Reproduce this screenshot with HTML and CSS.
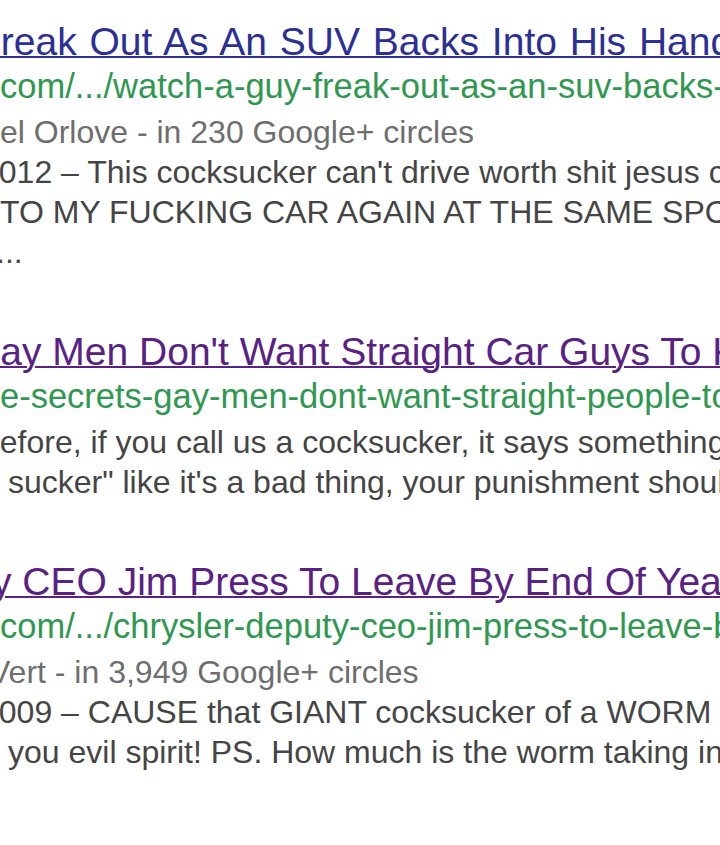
FILE: index.html
```html
<!DOCTYPE html>
<html lang="en">
<head>
  <meta charset="UTF-8" />
  <title>Search results</title>
  <link rel="stylesheet" href="styles.css">
</head>
<body>
  <div class="results">

    <!-- result 1 -->
    <div class="result">
      <a class="title seen-no shift-f" href="#">Freak Out As An SUV Backs Into His Handicap Spot</a>
      <div class="url">com/.../watch-a-guy-freak-out-as-an-suv-backs-into-his</div>
      <div class="meta">el Orlove - in 230 Google+ circles</div>
      <div class="snip shift-2">2012 &ndash; This cocksucker can't drive worth shit jesus christ</div>
      <div class="snip">TO MY FUCKING CAR AGAIN AT THE SAME SPOT</div>
      <div class="snip shift-dots">...</div>
    </div>

    <!-- result 2 -->
    <div class="result">
      <a class="title shift-g" href="#">Gay Men Don't Want Straight Car Guys To Know</a>
      <div class="url">e-secrets-gay-men-dont-want-straight-people-to</div>
      <div class="snip first shift-b">before, if you call us a cocksucker, it says something</div>
      <div class="snip pad">sucker" like it's a bad thing, your punishment should</div>
    </div>

    <!-- result 3 -->
    <div class="result">
      <a class="title shift-y" href="#">y CEO Jim Press To Leave By End Of Year</a>
      <div class="url">com/.../chrysler-deputy-ceo-jim-press-to-leave-by</div>
      <div class="meta shift-v">Vert - in 3,949 Google+ circles</div>
      <div class="snip shift-2">2009 &ndash; CAUSE that GIANT cocksucker of a WORM</div>
      <div class="snip pad">you evil spirit! PS. How much is the worm taking in</div>
    </div>

  </div>
</body>
</html>
```

FILE: styles.css
```css
body, html {
  margin: 0;
  padding: 0;
  background-color: #ffffff;
  font-family: "Liberation Sans", Arial, sans-serif;
  overflow: hidden;
}

.results {
  padding-top: 20px;
  display: flex;
  flex-direction: column;
  gap: 58px;
}

.result {
  display: flex;
  flex-direction: column;
  white-space: nowrap;
}

.title {
  display: block;
  font-size: 39px;
  line-height: 44px;
  color: #5a2184;
  text-decoration: underline;
  text-decoration-thickness: 2px;
}

.title.seen-no {
  color: #2b2f96;
  word-spacing: 2px;
}

.url {
  font-size: 34.5px;
  line-height: 44px;
  color: #2f9850;
}

.meta {
  font-size: 32px;
  line-height: 40px;
  color: #6e6e6e;
  margin-top: 4px;
}

.snip {
  font-size: 32px;
  line-height: 40px;
  color: #454545;
}

.snip.first {
  margin-top: 4px;
}

/* left edge clipping of the zoomed crop */
.shift-f { text-indent: -23px; }
.shift-g { text-indent: -30px; }
.shift-y { text-indent: -8px; }
.shift-v { text-indent: -11px; }
.shift-2 { text-indent: -19px; }
.shift-b { text-indent: -18px; }
.shift-dots { text-indent: -4px; }
.pad { text-indent: 8px; }
```
